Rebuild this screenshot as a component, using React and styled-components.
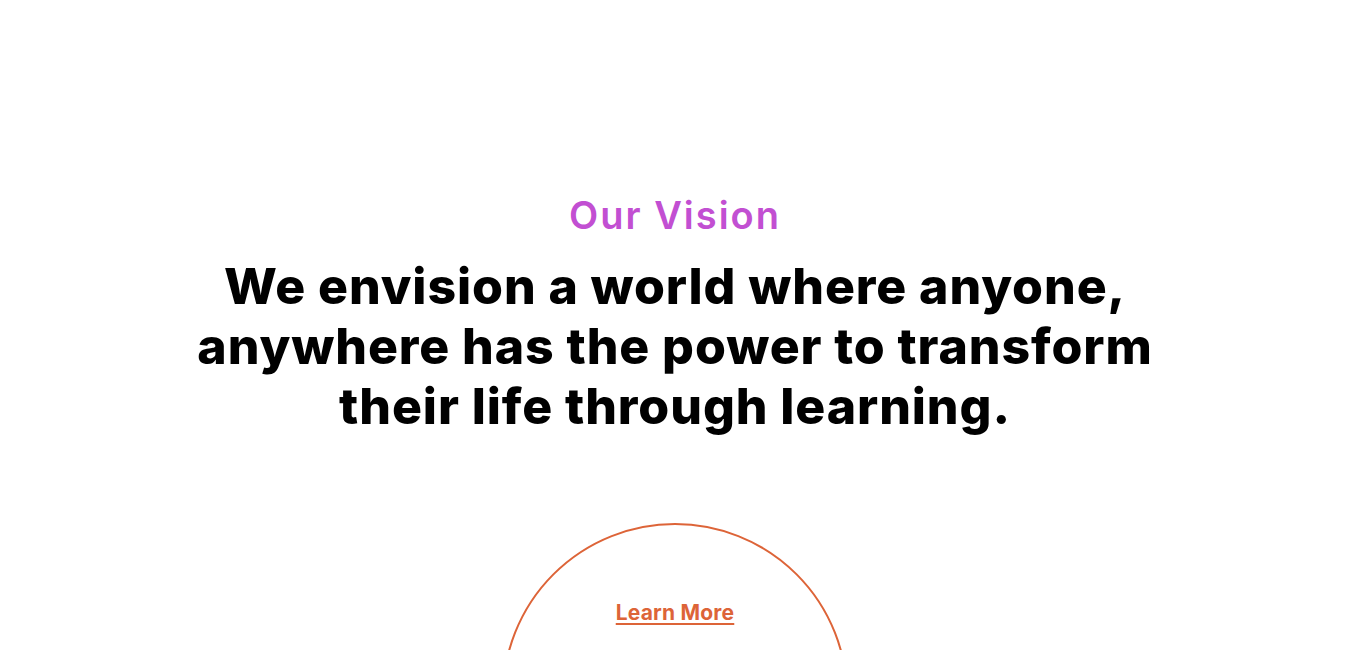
import React from "react"
import styled, { createGlobalStyle } from "styled-components"

const colors = {
  black: "#000000",
  purple: "#c24fd2",
  orange: "#dd6438",
  white: "#ffffff",
}

const GlobalStyle = createGlobalStyle`
  html, body {
    margin: 0;
    padding: 0;
    background: ${colors.white};
    overflow: hidden;
  }

  body {
    font-family: Inter, "Noto Sans", "Liberation Sans", sans-serif;
  }
`

const Section = styled.section`
  align-items: center;
  display: flex;
  flex-direction: column;
  height: 650px;
  padding-top: 192px;
  box-sizing: border-box;
  text-align: center;
`

const Eyebrow = styled.h3`
  color: ${colors.purple};
  font-size: 38px;
  font-weight: 600;
  letter-spacing: 2px;
  line-height: 46px;
  margin: 0 0 18px;
`

const Headline = styled.h2`
  color: ${colors.black};
  font-size: 50px;
  font-weight: 800;
  letter-spacing: 0.9px;
  line-height: 60px;
  margin: 0;
  max-width: 1040px;
`

const Circle = styled.div`
  border: 2px solid ${colors.orange};
  border-radius: 50%;
  box-sizing: border-box;
  display: flex;
  flex-shrink: 0;
  height: 346px;
  justify-content: center;
  margin-top: 87px;
  padding-top: 74px;
  width: 346px;
`

const LearnMore = styled.a`
  color: ${colors.orange};
  font-size: 21px;
  font-weight: 700;
  height: 28px;
  letter-spacing: 0.2px;
  line-height: 28px;
  text-decoration: underline;
  text-decoration-thickness: 2px;
  text-underline-offset: 3px;
  cursor: pointer;
`

const App = () => (
  <>
    <GlobalStyle />
    <Section>
      <Eyebrow>Our Vision</Eyebrow>
      <Headline>
        We envision a world where anyone,
        <br />
        anywhere has the power to transform
        <br />
        their life through learning.
      </Headline>
      <Circle>
        <LearnMore href="#">Learn More</LearnMore>
      </Circle>
    </Section>
  </>
)

export default App
